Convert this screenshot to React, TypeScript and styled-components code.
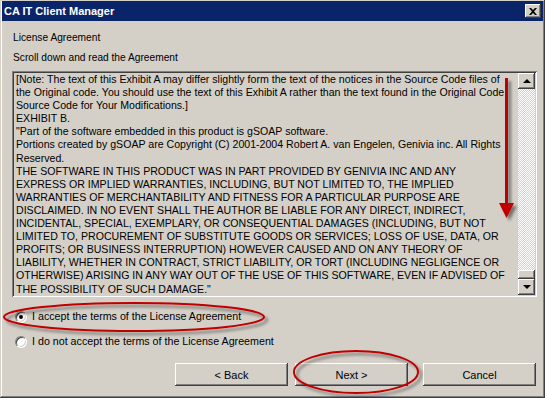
import React from 'react';
import styled, { createGlobalStyle } from 'styled-components';

const GlobalStyle = createGlobalStyle`
  html, body {
    margin: 0;
    padding: 0;
    background: #d4d0c8;
  }
  body {
    font-family: "Liberation Sans", Arial, sans-serif;
    font-size: 11px;
    color: #000;
  }
`;

const agreementLines = [
  '[Note: The text of this Exhibit A may differ slightly form the text of the notices in the Source Code files of',
  'the Original code. You should use the text of this Exhibit A rather than the text found in the Original Code',
  'Source Code for Your Modifications.]',
  'EXHIBIT B.',
  '"Part of the software embedded in this product is gSOAP software.',
  'Portions created by gSOAP are Copyright (C) 2001-2004 Robert A. van Engelen, Genivia inc. All Rights',
  'Reserved.',
  'THE SOFTWARE IN THIS PRODUCT WAS IN PART PROVIDED BY GENIVIA INC AND ANY',
  'EXPRESS OR IMPLIED WARRANTIES, INCLUDING, BUT NOT LIMITED TO, THE IMPLIED',
  'WARRANTIES OF MERCHANTABILITY AND FITNESS FOR A PARTICULAR PURPOSE ARE',
  'DISCLAIMED. IN NO EVENT SHALL THE AUTHOR BE LIABLE FOR ANY DIRECT, INDIRECT,',
  'INCIDENTAL, SPECIAL, EXEMPLARY, OR CONSEQUENTIAL DAMAGES (INCLUDING, BUT NOT',
  'LIMITED TO, PROCUREMENT OF SUBSTITUTE GOODS OR SERVICES; LOSS OF USE, DATA, OR',
  'PROFITS; OR BUSINESS INTERRUPTION) HOWEVER CAUSED AND ON ANY THEORY OF',
  'LIABILITY, WHETHER IN CONTRACT, STRICT LIABILITY, OR TORT (INCLUDING NEGLIGENCE OR',
  'OTHERWISE) ARISING IN ANY WAY OUT OF THE USE OF THIS SOFTWARE, EVEN IF ADVISED OF',
  'THE POSSIBILITY OF SUCH DAMAGE."',
];

// classic 3D bevels
const raised = `
  box-shadow: inset -1px -1px #404040, inset 1px 1px #ffffff,
    inset -2px -2px #808080, inset 2px 2px #d4d0c8;
`;
const sunken = `
  box-shadow: inset 1px 1px #808080, inset -1px -1px #ffffff,
    inset 2px 2px #404040, inset -2px -2px #d4d0c8;
`;

const Window = styled.div`
  position: relative;
  width: 545px;
  height: 398px;
  box-sizing: border-box;
  padding: 1px 2px 2px 2px;
  background: #d4d0c8;
  display: flex;
  flex-direction: column;
  box-shadow: inset -1px -1px #404040, inset 1px 1px #d4d0c8,
    inset -2px -2px #808080, inset 2px 2px #ffffff;
`;

const TitleBar = styled.div`
  height: 20px;
  background: #0a246a;
  display: flex;
  align-items: center;
  justify-content: space-between;
  padding: 0 2px 0 2px;
`;

const Title = styled.span`
  color: #fff;
  font-weight: bold;
  font-size: 11px;
`;

const CloseButton = styled.div`
  width: 16px;
  height: 14px;
  background: #d4d0c8;
  display: flex;
  align-items: center;
  justify-content: center;
  ${raised}
`;

const Body = styled.div`
  flex: 1;
  display: flex;
  flex-direction: column;
  padding: 0 6px 0 10px;
`;

const Label = styled.div<{ $gap: number }>`
  font-size: 10.2px;
  line-height: 13px;
  padding-left: 1px;
  margin-top: ${(p) => p.$gap}px;
`;

const TextBox = styled.div`
  margin-top: 7px;
  height: 226px;
  box-sizing: border-box;
  padding: 2px;
  display: flex;
  ${sunken}
`;

const TextArea = styled.div`
  flex: 1;
  overflow: hidden;
  padding: 0 0 0 2px;
  font-size: 10.6px;
`;

const TextLine = styled.div`
  line-height: 13.1px;
  white-space: nowrap;
`;

const ScrollBar = styled.div`
  width: 17px;
  display: flex;
  flex-direction: column;
  background-color: #d4d0c8;
  background-image: conic-gradient(#ffffff 25%, #d4d0c8 0 50%, #ffffff 0 75%, #d4d0c8 0);
  background-size: 2px 2px;
`;

const ScrollButton = styled.div`
  height: 16px;
  background: #d4d0c8;
  display: flex;
  align-items: center;
  justify-content: center;
  ${raised}
`;

const Track = styled.div`
  flex: 1;
`;

const Thumb = styled.div`
  height: 9px;
  background: #d4d0c8;
  ${raised}
`;

const Arrow = styled.div<{ $up: boolean }>`
  width: 0;
  height: 0;
  border-left: 4px solid transparent;
  border-right: 4px solid transparent;
  ${(p) => (p.$up ? 'border-bottom: 4px solid #000;' : 'border-top: 4px solid #000;')}
`;

const RadioGroup = styled.div`
  display: flex;
  flex-direction: column;
  gap: 12px;
  margin-top: 13px;
  padding-left: 3px;
`;

const RadioRow = styled.label`
  display: flex;
  align-items: center;
  gap: 5px;
  font-size: 10.7px;
  line-height: 13px;
`;

const RadioCircle = styled.span<{ $checked: boolean }>`
  position: relative;
  width: 12px;
  height: 12px;
  box-sizing: border-box;
  border-radius: 50%;
  background: #fff;
  border: 1px solid;
  border-color: #808080 #ffffff #ffffff #808080;
  box-shadow: inset 1px 1px #404040, inset -1px -1px #d4d0c8;

  &::after {
    content: '';
    display: ${(p) => (p.$checked ? 'block' : 'none')};
    position: absolute;
    left: 3px;
    top: 3px;
    width: 4px;
    height: 4px;
    border-radius: 50%;
    background: #000;
  }
`;

const ButtonRow = styled.div`
  display: flex;
  justify-content: flex-end;
  margin-top: 15px;
  padding-right: 1px;
`;

const Button = styled.div<{ $gap: number }>`
  width: 113px;
  height: 23px;
  margin-left: ${(p) => p.$gap}px;
  display: flex;
  align-items: center;
  justify-content: center;
  background: #d4d0c8;
  ${raised}
`;

const Annotations = styled.svg`
  position: absolute;
  left: 0;
  top: 0;
  pointer-events: none;
`;

export default function App() {
  return (
    <>
      <GlobalStyle />
      <Window>
        <TitleBar>
          <Title>CA IT Client Manager</Title>
          <CloseButton>
            <svg width="8" height="7" viewBox="0 0 8 7">
              <path d="M0 0h2l2 2 2-2h2L5 3.5 8 7H6L4 5 2 7H0l3-3.5z" fill="#000" />
            </svg>
          </CloseButton>
        </TitleBar>
        <Body>
          <Label $gap={10}>License Agreement</Label>
          <Label $gap={7}>Scroll down and read the Agreement</Label>
          <TextBox>
            <TextArea>
              {agreementLines.map((line, i) => (
                <TextLine key={i}>{line}</TextLine>
              ))}
            </TextArea>
            <ScrollBar>
              <ScrollButton>
                <Arrow $up={true} />
              </ScrollButton>
              <Track />
              <Thumb />
              <ScrollButton>
                <Arrow $up={false} />
              </ScrollButton>
            </ScrollBar>
          </TextBox>
          <RadioGroup>
            <RadioRow>
              <RadioCircle $checked={true} />
              I accept the terms of the License Agreement
            </RadioRow>
            <RadioRow>
              <RadioCircle $checked={false} />
              I do not accept the terms of the License Agreement
            </RadioRow>
          </RadioGroup>
          <ButtonRow>
            <Button $gap={0}>&lt; Back</Button>
            <Button $gap={7}>Next &gt;</Button>
            <Button $gap={15}>Cancel</Button>
          </ButtonRow>
        </Body>
        <Annotations width="545" height="398" viewBox="0 0 545 398">
          <defs>
            <filter id="shadow" x="-20%" y="-20%" width="140%" height="140%">
              <feDropShadow dx="3" dy="3" stdDeviation="1.5" floodColor="#000" floodOpacity="0.45" />
            </filter>
          </defs>
          <g filter="url(#shadow)">
            <rect x="505" y="78" width="3" height="128" fill="#c00000" />
            <polygon points="499,203 514,203 506.5,218" fill="#c00000" />
            <ellipse cx="134" cy="317" rx="130" ry="14" fill="none" stroke="#c00000" strokeWidth="2" />
            <ellipse cx="356" cy="372" rx="62" ry="21" fill="none" stroke="#c00000" strokeWidth="2" />
          </g>
        </Annotations>
      </Window>
    </>
  );
}
